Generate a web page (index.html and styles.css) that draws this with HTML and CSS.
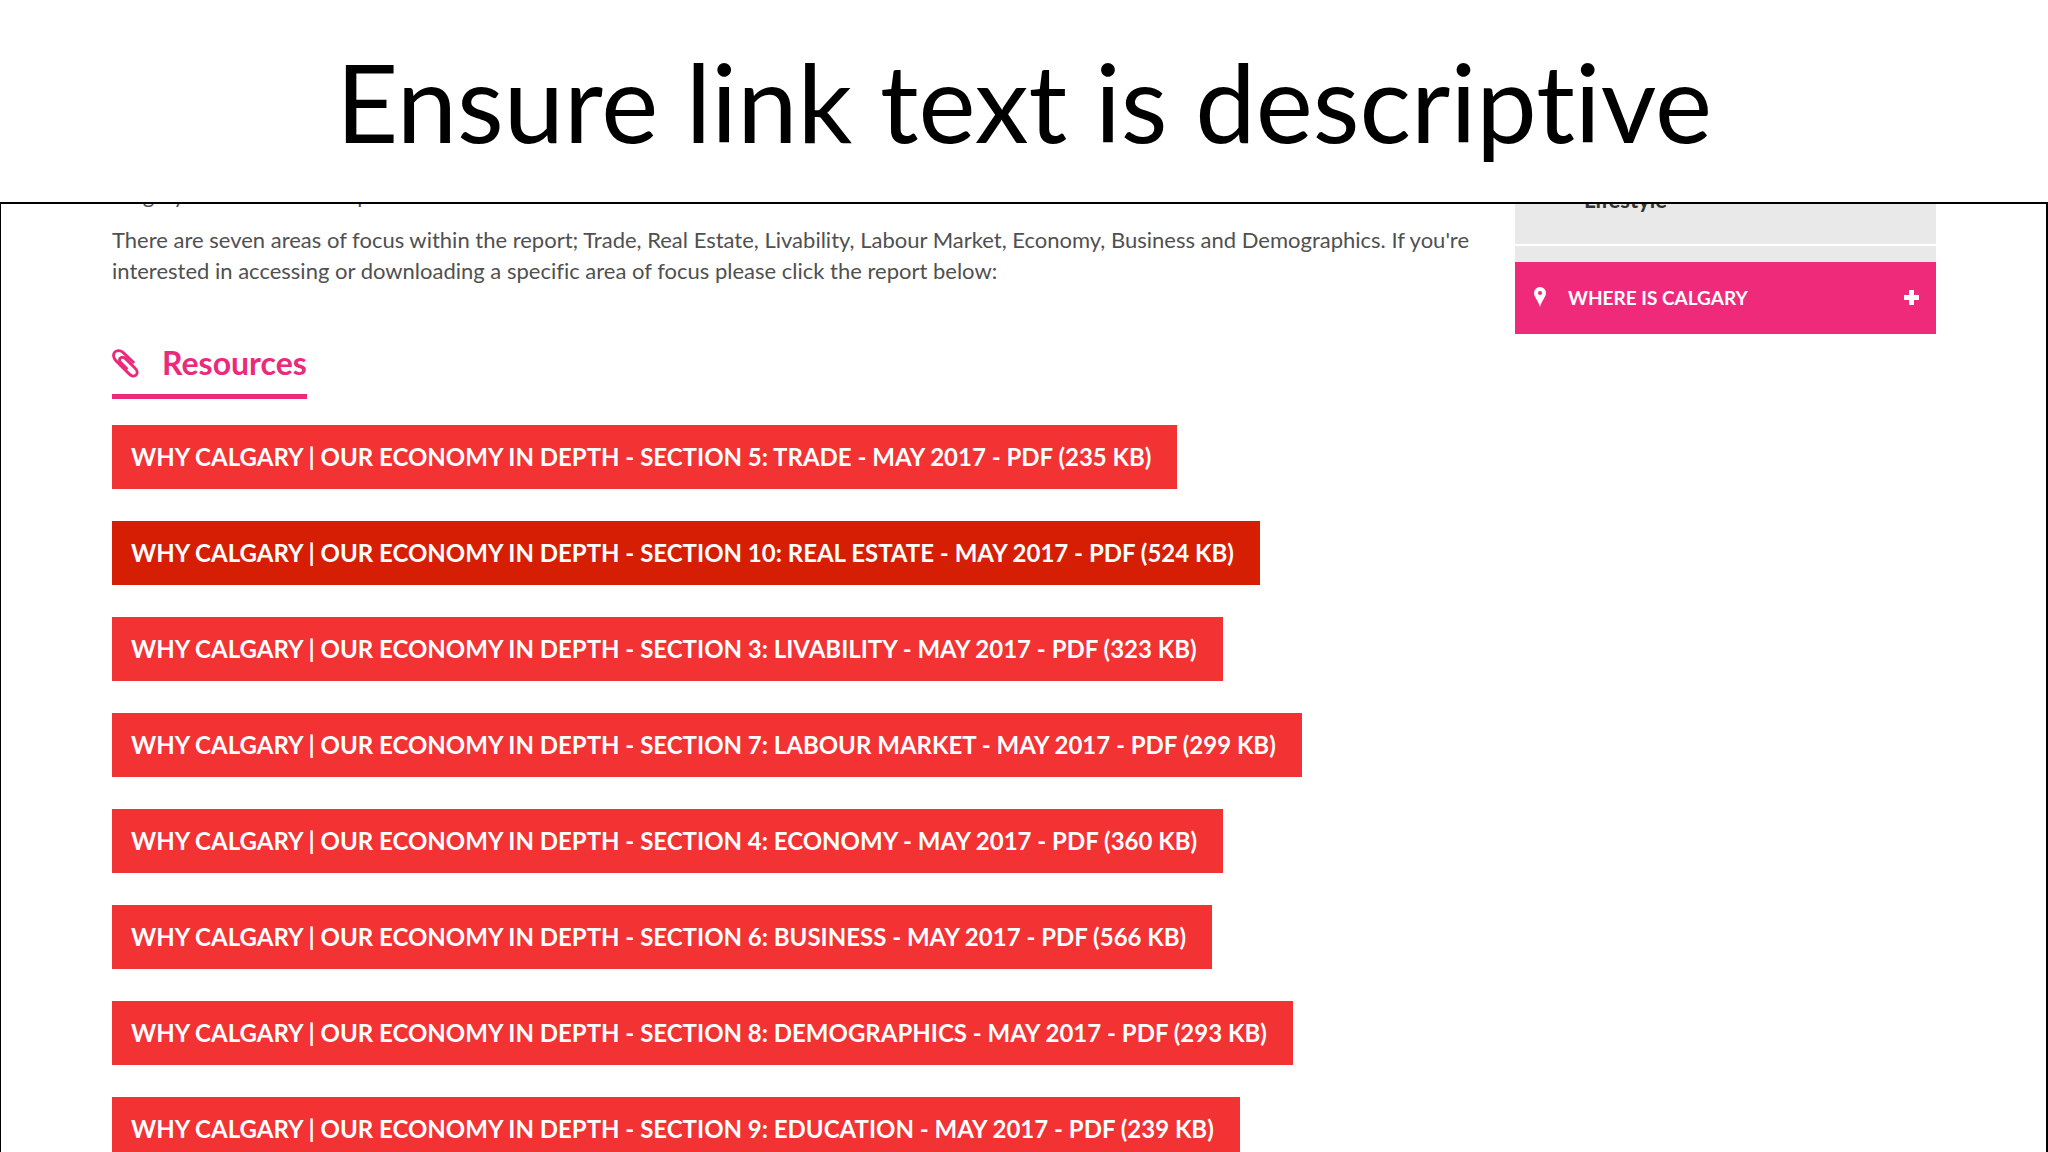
FILE: index.html
```html
<!DOCTYPE html>
<html lang="en">
<head>
<meta charset="utf-8">
<title>Ensure link text is descriptive</title>
<link rel="stylesheet" href="styles.css">
</head>
<body>
<header class="slide-title"><h1>Ensure link text is descriptive</h1></header>
<div class="frame">
  <main class="content">
    <div class="intro">
      <p class="cut-line">Calgary Economic Development</p>
      <p>There are seven areas of focus within the report; Trade, Real Estate, Livability, Labour Market, Economy, Business and Demographics. If you're interested in accessing or downloading a specific area of focus please click the report below:</p>
    </div>
    <h2 class="resources">
      <svg class="clip" viewBox="0 0 28 30" aria-hidden="true"><path d="M23 14.500 12 4C9 1 5 1 3 3s-2 6 1 9l14 14c2 2 5 3 7 1s1-5-1-7L14 10c-1-1-3-2-5-1s-1 4 0 5l7 7"/></svg>
      Resources
    </h2>
    <ul class="reports">
      <li><a href="#trade">WHY CALGARY | OUR ECONOMY IN DEPTH - SECTION 5: TRADE - MAY 2017 - PDF (235 KB)</a></li>
      <li><a class="active" href="#real-estate">WHY CALGARY | OUR ECONOMY IN DEPTH - SECTION 10: REAL ESTATE - MAY 2017 - PDF (524 KB)</a></li>
      <li><a href="#livability">WHY CALGARY | OUR ECONOMY IN DEPTH - SECTION 3: LIVABILITY - MAY 2017 - PDF (323 KB)</a></li>
      <li><a href="#labour">WHY CALGARY | OUR ECONOMY IN DEPTH - SECTION 7: LABOUR MARKET - MAY 2017 - PDF (299 KB)</a></li>
      <li><a href="#economy">WHY CALGARY | OUR ECONOMY IN DEPTH - SECTION 4: ECONOMY - MAY 2017 - PDF (360 KB)</a></li>
      <li><a href="#business">WHY CALGARY | OUR ECONOMY IN DEPTH - SECTION 6: BUSINESS - MAY 2017 - PDF (566 KB)</a></li>
      <li><a href="#demographics">WHY CALGARY | OUR ECONOMY IN DEPTH - SECTION 8: DEMOGRAPHICS - MAY 2017 - PDF (293 KB)</a></li>
      <li><a href="#education">WHY CALGARY | OUR ECONOMY IN DEPTH - SECTION 9: EDUCATION - MAY 2017 - PDF (239 KB)</a></li>
    </ul>
  </main>
  <aside class="sidebar">
    <a class="side-item" href="#lifestyle">Lifestyle</a>
    <div class="side-gap"></div>
    <button class="side-toggle" type="button">
      <svg class="pin" viewBox="0 0 12 20" aria-hidden="true"><path fill-rule="evenodd" d="M6 0a6 6 0 0 0-6 6c0 4 4 7 6 14 2-7 6-10 6-14a6 6 0 0 0-6-6Zm0 4a2 2 0 1 1 0 4 2 2 0 0 1 0-4Z"/></svg>
      <span>WHERE IS CALGARY</span>
      <svg class="plus" viewBox="0 0 15 15" aria-hidden="true"><path d="M5 0h5v5h5v5h-5v5H5v-5H0V5h5Z"/></svg>
    </button>
  </aside>
</div>
</body>
</html>
```
FILE: styles.css
```css
* { box-sizing: border-box; }
body { margin: 0; background: #fff; color: #505050; font-family: Lato, "Liberation Sans", sans-serif; font-variant-ligatures: none; height: 100vh; overflow: hidden; display: flex; flex-direction: column; }
h1, h2, p, ul { margin: 0; padding: 0; }
.slide-title { height: 202px; flex: none; text-align: center; color: #000; }
.slide-title h1 { font-size: 108px; line-height: 202px; font-weight: 400; white-space: nowrap; }
.frame { flex: 1; min-height: 0; overflow: hidden; border: 2px solid #000; border-width: 2px 2px 0 1px; display: flex; justify-content: space-between; align-items: flex-start; padding: 0 110px 0 111px; }
.content { flex: 0 1 1372px; }
.intro { font-size: 22px; line-height: 31px; }
.cut-line { margin-top: -25px; margin-bottom: 14px; }
.resources { display: inline-flex; align-items: center; gap: 23px; height: 66px; margin-top: 47px; border-bottom: 5px solid #eb2a7b; padding-bottom: 1px; color: #eb2a7b; font-size: 32px; line-height: 40px; }
.clip { width: 27px; height: 29px; fill: none; stroke: #eb2a7b; stroke-width: 3; }
.reports { list-style: none; margin-top: 26px; display: flex; flex-direction: column; align-items: flex-start; gap: 32px; }
.reports a { display: block; padding: 0 26px 0 19px; background: #f23233; color: #fff; font-size: 24px; font-weight: 700; line-height: 64px; white-space: nowrap; text-decoration: none; }
.reports a.active { background: #d61e05; }
.sidebar { flex: 0 1 421px; }
.side-item { display: block; height: 56px; margin-top: -16px; padding-left: 69px; background: #e9e9e9; color: #333; font-size: 22px; font-weight: 700; line-height: 24px; text-decoration: none; }
.side-gap { height: 16px; margin-top: 2px; background: #e9e9e9; }
.side-toggle { width: 100%; height: 72px; display: flex; align-items: center; border: 0; padding: 0 17px 2px 19px; background: #ef2a7b; color: #fff; font: 700 19px Lato, sans-serif; }
.pin { width: 12px; height: 20px; margin-right: 22px; fill: #fff; }
.plus { width: 15px; height: 15px; margin-left: auto; fill: #fff; }
```
